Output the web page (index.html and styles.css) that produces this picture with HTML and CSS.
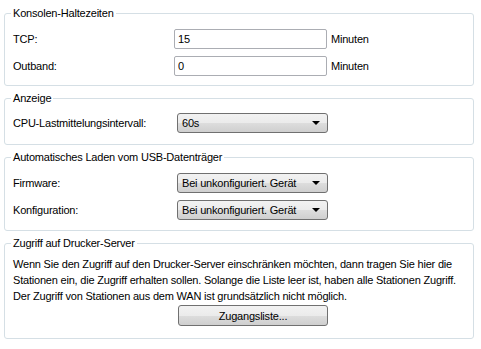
FILE: index.html
```html
<!DOCTYPE html>
<html>
<head>
<meta charset="utf-8">
<link rel="stylesheet" href="styles.css">
</head>
<body>
<div class="page">
  <fieldset class="group g1">
    <legend>Konsolen-Haltezeiten</legend>
    <div class="row">
      <span class="label">TCP:</span>
      <input class="text" type="text" value="15">
      <span class="unit">Minuten</span>
    </div>
    <div class="row">
      <span class="label">Outband:</span>
      <input class="text" type="text" value="0">
      <span class="unit">Minuten</span>
    </div>
  </fieldset>

  <fieldset class="group g2">
    <legend>Anzeige</legend>
    <div class="row">
      <span class="label">CPU-Lastmittelungsintervall:</span>
      <div class="combo"><span>60s</span><i class="arrow"></i></div>
    </div>
  </fieldset>

  <fieldset class="group g3">
    <legend>Automatisches Laden vom USB-Datenträger</legend>
    <div class="row">
      <span class="label">Firmware:</span>
      <div class="combo"><span>Bei unkonfiguriert. Gerät</span><i class="arrow"></i></div>
    </div>
    <div class="row">
      <span class="label">Konfiguration:</span>
      <div class="combo"><span>Bei unkonfiguriert. Gerät</span><i class="arrow"></i></div>
    </div>
  </fieldset>

  <fieldset class="group g4">
    <legend>Zugriff auf Drucker-Server</legend>
    <p class="desc">Wenn Sie den Zugriff auf den Drucker-Server einschränken möchten, dann tragen Sie hier die Stationen ein, die Zugriff erhalten sollen. Solange die Liste leer ist, haben alle Stationen Zugriff. Der Zugriff von Stationen aus dem WAN ist grundsätzlich nicht möglich.</p>
    <div class="btnrow"><button class="btn">Zugangsliste...</button></div>
  </fieldset>
</div>
</body>
</html>
```
FILE: styles.css
```css
html, body {
  margin: 0;
  padding: 0;
  background: #ffffff;
}
body {
  font-family: "Liberation Sans", Arial, sans-serif;
  font-size: 11px;
  letter-spacing: -0.2px;
  color: #000000;
}
.page {
  width: 470px;
  padding: 7px 0 0 4px;
  display: flex;
  flex-direction: column;
  gap: 6px;
}
.group {
  margin: 0;
  border: 1px solid #d5dfe5;
  border-radius: 3px;
  padding: 0 8px 0 8px;
  min-width: 0;
}
.group legend {
  padding: 0 2px;
  margin-left: -2px;
  line-height: 13px;
}
.row {
  display: flex;
  align-items: center;
  height: 20px;
}
.row + .row {
  margin-top: 7px;
}
.g1 { padding-top: 9px; padding-bottom: 9px; }
.g2 { padding-top: 8px; padding-bottom: 11px; }
.g3 { padding-top: 9px; padding-bottom: 10px; }
.g4 { padding-top: 6px; padding-bottom: 12px; }
.label {
  width: 161px;
  flex: none;
}
.text {
  box-sizing: border-box;
  width: 153px;
  height: 20px;
  margin: 0;
  border: 1px solid #abadb3;
  border-top-color: #abadb3;
  border-radius: 2px;
  padding: 0 3px;
  font: inherit;
  color: #000;
  background: #fff;
  outline: none;
}
.unit {
  margin-left: 4px;
}
.combo {
  box-sizing: border-box;
  width: 151px;
  height: 20px;
  margin-left: 3px;
  border: 1px solid #707070;
  border-radius: 3px;
  background: linear-gradient(#f2f2f2 0%, #ebebeb 50%, #dddddd 51%, #cfcfcf 100%);
  display: flex;
  align-items: center;
  justify-content: space-between;
  padding: 0 7px 0 4px;
}
.arrow {
  width: 0;
  height: 0;
  border-left: 4px solid transparent;
  border-right: 4px solid transparent;
  border-top: 4px solid #000;
}
.desc {
  margin: 0;
  line-height: 16px;
}
.btnrow {
  display: flex;
  padding-left: 165px;
  margin-top: 1px;
}
.btn {
  box-sizing: border-box;
  width: 150px;
  height: 21px;
  border: 1px solid #707070;
  border-radius: 3px;
  background: linear-gradient(#f2f2f2 0%, #ebebeb 50%, #dddddd 51%, #cfcfcf 100%);
  font: inherit;
  letter-spacing: -0.2px;
  color: #000;
  padding: 0;
}
```
